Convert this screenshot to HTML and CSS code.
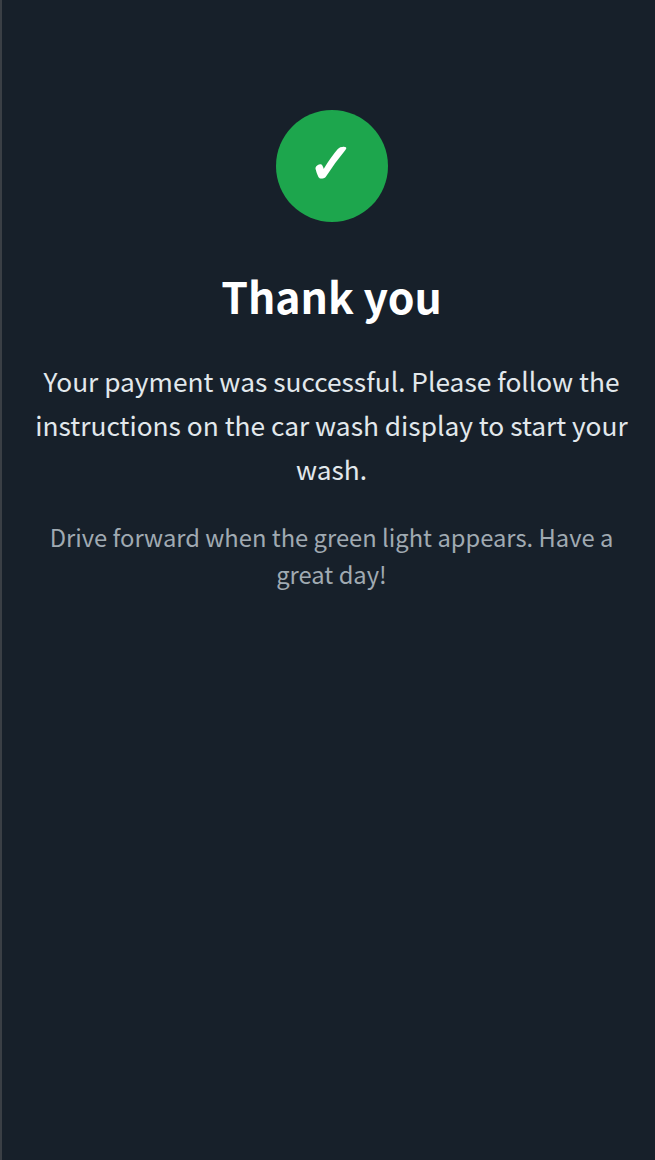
FILE: index.html
```html
<!DOCTYPE html>
<html lang="en">

<head>
  <meta charset="UTF-8">
  <meta name="viewport" content="width=device-width, initial-scale=1.0">
  <title>Thank you</title>
  <link rel="stylesheet" href="styles.css">
</head>

<body>
  <div class="container">
    <div class="check-circle">✓</div>
    <h1 class="title">Thank you</h1>
    <p class="message">Your payment was successful. Please follow the instructions on the car wash display to start your wash.</p>
    <p class="note">Drive forward when the green light appears. Have a great day!</p>
  </div>
</body>

</html>
```

FILE: styles.css
```css
/* Page background and base font */
body {
  margin: 0;
  min-height: 100vh;
  background-color: #17202a;
  color: white;
  font-family: "Noto Sans CJK JP", sans-serif;
  border-left: 2px solid #3a3f45;
  box-sizing: border-box;
}

.container {
  display: flex;
  flex-direction: column;
  align-items: center;
  text-align: center;
  padding: 110px 23px 0 30px;
}

.check-circle {
  width: 112px;
  height: 112px;
  padding: 0 2px 10px 0;
  box-sizing: border-box;
  border-radius: 50%;
  background-color: #1da64d;
  display: flex;
  align-items: center;
  justify-content: center;
  font-family: "Noto Sans", sans-serif;
  font-size: 56px;
  line-height: 1;
  font-weight: bold;
}

.title {
  margin: 46px 1px 0 0;
  font-size: 42.8px;
  line-height: 54px;
  font-weight: 700;
}

.message {
  margin: 37px 1px 0 0;
  font-size: 26.3px;
  line-height: 44px;
  color: #e2e8ec;
}

.note {
  margin: 27px 1px 0 0;
  font-size: 23.76px;
  line-height: 37px;
  color: #a0aab2;
}
```
